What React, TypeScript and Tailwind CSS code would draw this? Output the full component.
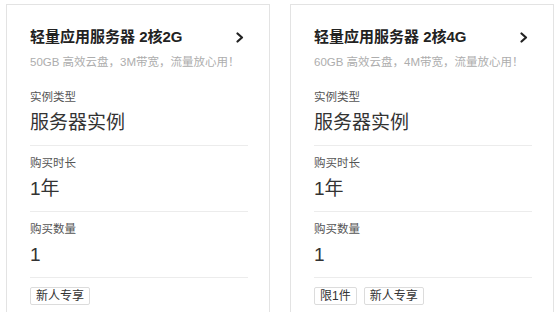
import React from "react";

const font = { fontFamily: '"Liberation Sans", "Noto Sans CJK SC", sans-serif' };

function Chevron() {
  return (
    <svg width="8" height="11" viewBox="0 0 8 11" className="mr-[4px] shrink-0">
      <polyline points="1.5,1.5 6,5.5 1.5,9.5" fill="none" stroke="#222" strokeWidth="2.2" strokeLinecap="round" strokeLinejoin="round" />
    </svg>
  );
}

function Section({ label, value }: { label: string; value: string }) {
  return (
    <div className="pt-[9px] pb-[10px] border-b border-[#ececec]">
      <div className="text-[11.5px] leading-[16px] text-[#555]">{label}</div>
      <div className="mt-[6px] text-[19px] leading-[24px] text-[#333]">{value}</div>
    </div>
  );
}

function Card({ title, sub, badges }: { title: string; sub: string; badges: string[] }) {
  return (
    <div className="w-[264px] h-[340px] shrink-0 border border-[#e3e3e3] bg-white pl-[23px] pr-[21px] pt-[22px]">
      <div className="flex items-center justify-between h-[20px]">
        <div className="text-[15px] leading-[20px] font-bold text-[#222]">{title}</div>
        <Chevron />
      </div>
      <div className="mt-[7px] text-[11.5px] leading-[16px] text-[#adadad] whitespace-nowrap">{sub}</div>
      <div className="mt-[10px]">
        <Section label="实例类型" value="服务器实例" />
        <Section label="购买时长" value="1年" />
        <Section label="购买数量" value="1" />
      </div>
      <div className="mt-[9px] flex gap-[7px]">
        {badges.map((b) => (
          <span key={b} className="h-[18px] px-[5px] border border-[#dcdcdc] rounded-[2px] text-[12px] leading-[16px] text-[#333] bg-white">
            {b}
          </span>
        ))}
      </div>
    </div>
  );
}

export default function App() {
  return (
    <div className="w-[557px] h-[312px] overflow-hidden bg-white" style={font}>
      <div className="flex gap-[20px] pl-[6px] pt-[4px]">
        <Card title="轻量应用服务器 2核2G" sub="50GB 高效云盘，3M带宽，流量放心用！" badges={["新人专享"]} />
        <Card title="轻量应用服务器 2核4G" sub="60GB 高效云盘，4M带宽，流量放心用！" badges={["限1件", "新人专享"]} />
      </div>
    </div>
  );
}
